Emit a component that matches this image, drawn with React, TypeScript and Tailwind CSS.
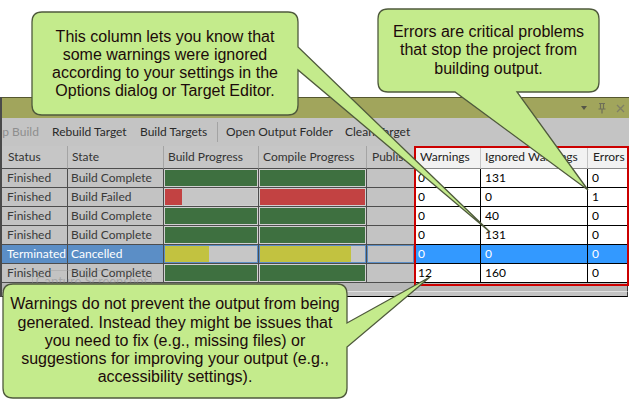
import React from 'react';

type Bar = { color: string; pct: number };
type Row = {
  status: string;
  state: string;
  build: Bar;
  compile: Bar;
  warnings: string;
  ignored: string;
  errors: string;
  selected?: boolean;
};

const GREEN = 'bg-[#3e7040]';
const RED = 'bg-[#c24242]';
const YELLOW = 'bg-[#c2c240]';

const rows: Row[] = [
  { status: 'Finished', state: 'Build Complete', build: { color: GREEN, pct: 100 }, compile: { color: GREEN, pct: 100 }, warnings: '0', ignored: '131', errors: '0' },
  { status: 'Finished', state: 'Build Failed', build: { color: RED, pct: 19 }, compile: { color: RED, pct: 100 }, warnings: '0', ignored: '0', errors: '1' },
  { status: 'Finished', state: 'Build Complete', build: { color: GREEN, pct: 100 }, compile: { color: GREEN, pct: 100 }, warnings: '0', ignored: '40', errors: '0' },
  { status: 'Finished', state: 'Build Complete', build: { color: GREEN, pct: 100 }, compile: { color: GREEN, pct: 100 }, warnings: '0', ignored: '131', errors: '0' },
  { status: 'Terminated', state: 'Cancelled', build: { color: YELLOW, pct: 48 }, compile: { color: YELLOW, pct: 87 }, warnings: '0', ignored: '0', errors: '0', selected: true },
  { status: 'Finished', state: 'Build Complete', build: { color: GREEN, pct: 100 }, compile: { color: GREEN, pct: 100 }, warnings: '12', ignored: '160', errors: '0' },
];

function BarCell({ bar, width, selected }: { bar: Bar; width: string; selected?: boolean }) {
  return (
    <div className={`${width} h-full border-r border-b border-[#4d4d4d] bg-[#c3c3c3]`}>
      <div className={`h-full border ${selected ? 'border-[#5b8ec6]' : 'border-[#d0d0d0]'} bg-[#c6c6c6]`}>
        <div className={`h-full ${bar.color}`} style={{ width: `${bar.pct}%` }} />
      </div>
    </div>
  );
}

function TextCell({ width, children, selected, pad = 'pl-[5px]' }: { width: string; children?: React.ReactNode; selected?: boolean; pad?: string }) {
  return (
    <div
      className={`${width} h-full ${pad} border-r border-b border-[#4d4d4d] leading-[18px] whitespace-nowrap overflow-hidden ${
        selected ? 'bg-[#5b8ec6] text-white' : 'bg-[#c3c3c3] text-[#3a3a3a]'
      }`}
    >
      {children}
    </div>
  );
}

function CountCell({ width, children, selected, pad = 'pl-[3px]' }: { width: string; children?: React.ReactNode; selected?: boolean; pad?: string }) {
  return (
    <div
      className={`${width} h-full ${pad} border-r border-b border-black leading-[18px] whitespace-nowrap overflow-hidden ${
        selected ? 'bg-[#3399ff] text-white' : 'bg-white text-black'
      }`}
    >
      {children}
    </div>
  );
}

export default function App() {
  return (
    <div className="relative w-[629px] h-[408px] overflow-hidden bg-white pt-[97px]">
      {/* Build window */}
      <div className="w-[629px] border-l-2 border-[#4a4a4a] font-['Lato',sans-serif] text-[12px]">
        {/* Title bar */}
        <div className="h-[21px] border-t border-[#55572f] bg-[#a1a55c] flex items-center justify-end pr-[4px] gap-[10px]">
          <svg width="8" height="6" viewBox="0 0 8 6">
            <path d="M1 1 H7 L4 5 Z" fill="#555547" />
          </svg>
          <svg width="8" height="12" viewBox="0 0 8 12">
            <path d="M1 1.5 H7 M2.5 1.5 V7 M5.5 1.5 V7 M0.5 7 H7.5 M4 7 V11.5" stroke="#6f6f58" strokeWidth="1.2" fill="none" />
          </svg>
          <svg width="9" height="9" viewBox="0 0 9 9">
            <path d="M1 1 L8 8 M8 1 L1 8" stroke="#7f7f66" strokeWidth="1.3" />
          </svg>
        </div>

        {/* Toolbar */}
        <div className="h-[28px] bg-[#c4c4c4] flex items-center whitespace-nowrap overflow-hidden text-[#2a2a2a]">
          <span className="ml-[-17px] w-[67px] shrink-0 text-[#8e8e8e]">Stop Build</span>
          <span className="w-[88px] shrink-0">Rebuild Target</span>
          <span className="w-[77px] shrink-0">Build Targets</span>
          <span className="w-px h-[20px] bg-[#a3a3a3] mr-[8px] shrink-0" />
          <span className="w-[119px] shrink-0">Open Output Folder</span>
          <span className="shrink-0">Clean Target</span>
        </div>

        {/* Header */}
        <div className="flex h-[23px] leading-[22px] text-[#333]">
          <div className="w-[66px] pl-[6px] bg-[#c6c6c6] border-r border-b border-r-[#a4a4a4] border-b-[#4d4d4d]">Status</div>
          <div className="w-[96px] pl-[4px] bg-[#c6c6c6] border-r border-b border-r-[#a4a4a4] border-b-[#4d4d4d]">State</div>
          <div className="w-[95px] pl-[4px] bg-[#c6c6c6] border-r border-b border-r-[#a4a4a4] border-b-[#4d4d4d]">Build Progress</div>
          <div className="w-[108px] pl-[4px] bg-[#c6c6c6] border-r border-b border-r-[#a4a4a4] border-b-[#4d4d4d] whitespace-nowrap overflow-hidden">Compile Progress</div>
          <div className="w-[48px] pl-[5px] bg-[#c6c6c6] border-r border-b border-r-[#a4a4a4] border-b-[#4d4d4d] whitespace-nowrap overflow-hidden">Publish</div>
          <div className="w-[66px] pl-[5px] bg-[#f2f2f2] border-r border-b border-r-[#c4c4c4] border-b-[#8a8a8a] text-[#222]">Warnings</div>
          <div className="w-[107px] pl-[4px] bg-[#f2f2f2] border-r border-b border-r-[#c4c4c4] border-b-[#8a8a8a] text-[#222] whitespace-nowrap">Ignored Warnings</div>
          <div className="flex-1 pl-[5px] bg-[#f2f2f2] border-b border-b-[#8a8a8a] text-[#222]">Errors</div>
        </div>

        {/* Rows */}
        {rows.map((r, i) => (
          <div key={i} className="flex h-[19px]">
            <TextCell width="w-[66px]" selected={r.selected}>{r.status}</TextCell>
            <TextCell width="w-[96px]" selected={r.selected} pad="pl-[3px]">{r.state}</TextCell>
            <BarCell width="w-[95px]" bar={r.build} selected={r.selected} />
            <BarCell width="w-[108px]" bar={r.compile} selected={r.selected} />
            <div className="w-[48px] h-full border-r border-b border-[#4d4d4d] bg-[#c3c3c3]">
              {r.selected && <div className="h-full border border-[#5b8ec6]" />}
            </div>
            <CountCell width="w-[66px]" selected={r.selected}>{r.warnings}</CountCell>
            <CountCell width="w-[107px]" selected={r.selected} pad="pl-[4px]">{r.ignored}</CountCell>
            <CountCell width="flex-1" selected={r.selected} pad="pl-[4px]">{r.errors}</CountCell>
          </div>
        ))}

        {/* Bottom scroll band */}
        <div className="h-[9px] bg-[#b8b8b8] border-b border-[#e2e2e2] border-r border-r-[#3a3a3a] mr-[1px]" />
        <div className="h-[5px] bg-[#c4c4c4] border-b border-black border-r border-r-[#3a3a3a] mr-[1px]" />
      </div>

      {/* Faded capture button behind the bottom callout */}
      <div className="absolute left-[32px] top-[270px] w-[120px] h-[22px] rounded-[3px] border border-[#9a9a9a]/40 font-['Lato',sans-serif] text-[13px] text-[#8a8a8a]/50 text-center leading-[20px]">
        Capture Screenshot
      </div>

      {/* Highlight around warning / error columns */}
      <div className="absolute left-[414px] top-[146px] w-[215px] h-[140px] border-2 border-[#cc0000]" />

      {/* Callout shapes */}
      <svg className="absolute left-0 top-0 pointer-events-none" width="629" height="408" viewBox="0 0 629 408">
        <path
          d="M42 12 H288 Q298 12 298 22 V47 L490 232 L298 70 V105 Q298 115 288 115 H42 Q32 115 32 105 V22 Q32 12 42 12 Z"
          fill="#c4eb8c"
          stroke="#4f5a3c"
          strokeWidth="1.3"
        />
        <path
          d="M388 9 H589 Q599 9 599 19 V82 Q599 92 589 92 H517 L588 190 L455 92 H388 Q378 92 378 82 V19 Q378 9 388 9 Z"
          fill="#c4eb8c"
          stroke="#4f5a3c"
          strokeWidth="1.3"
        />
        <path
          d="M13 284 H337 Q347 284 347 294 V323 L430 277 L347 347 V388 Q347 398 337 398 H13 Q3 398 3 388 V294 Q3 284 13 284 Z"
          fill="#c4eb8c"
          stroke="#4f5a3c"
          strokeWidth="1.3"
        />
      </svg>

      {/* Callout texts */}
      <div className="absolute left-[32px] top-[12px] w-[266px] h-[103px] flex items-center justify-center text-center font-['Liberation_Sans',Arial,sans-serif] text-[16px] leading-[18px] text-[#1c0a0a]">
        <p>
          This column lets you know that
          <br />
          some warnings were ignored
          <br />
          according to your settings in the
          <br />
          Options dialog or Target Editor.
        </p>
      </div>
      <div className="absolute left-[378px] top-[9px] w-[221px] h-[83px] flex items-center justify-center text-center font-['Liberation_Sans',Arial,sans-serif] text-[16px] leading-[18.5px] text-[#1c0a0a]">
        <p>
          Errors are critical problems
          <br />
          that stop the project from
          <br />
          building output.
        </p>
      </div>
      <div className="absolute left-[3px] top-[284px] w-[344px] h-[114px] flex items-center justify-center text-center font-['Liberation_Sans',Arial,sans-serif] text-[16px] leading-[18.3px] text-[#1c0a0a]">
        <p>
          Warnings do not prevent the output from being
          <br />
          generated. Instead they might be issues that
          <br />
          you need to fix (e.g., missing files) or
          <br />
          suggestions for improving your output (e.g.,
          <br />
          accessibility settings).
        </p>
      </div>
    </div>
  );
}
